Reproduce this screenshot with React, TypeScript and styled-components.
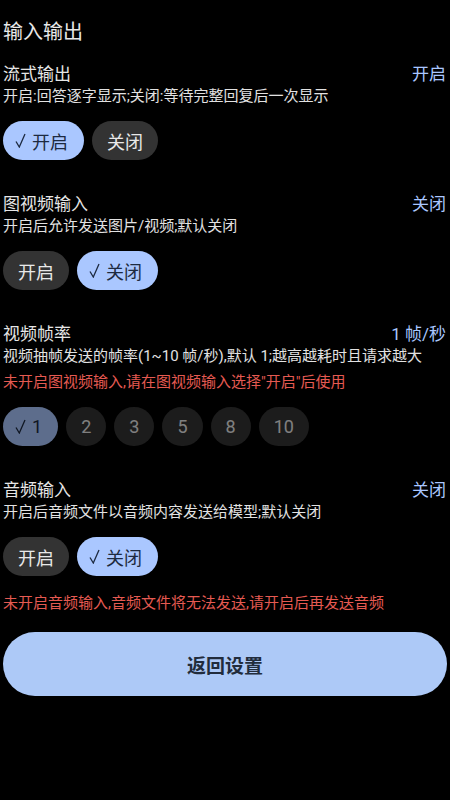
import React, { useState } from 'react';
import styled, { createGlobalStyle } from 'styled-components';

const GlobalStyle = createGlobalStyle`
  html, body {
    margin: 0;
    padding: 0;
    background: #000;
  }
  body {
    font-family: Roboto, "Noto Sans CJK SC", sans-serif;
    -webkit-font-smoothing: antialiased;
  }
`;

const Page = styled.div`
  min-height: 100vh;
  background: #000;
  padding: 18px 3px 24px;
  box-sizing: border-box;
  display: flex;
  flex-direction: column;
`;

const PageTitle = styled.h1`
  margin: 0 0 14px;
  font-size: 20px;
  line-height: 28px;
  font-weight: 400;
  color: #e8e8e8;
`;

const Section = styled.section<{ $last?: boolean }>`
  display: flex;
  flex-direction: column;
  margin-bottom: ${(p) => (p.$last ? 0 : 30)}px;
`;

const TitleRow = styled.div`
  display: flex;
  justify-content: space-between;
  align-items: center;
  height: 24px;
`;

const SectionTitle = styled.span`
  font-size: 17px;
  color: #e6e6e6;
`;

const SectionValue = styled.span`
  font-size: 17px;
  color: #aac7ff;
  padding-right: 1px;
`;

const Desc = styled.p`
  margin: 0;
  font-size: 15px;
  line-height: 25px;
  color: #e2e2e2;
  white-space: nowrap;
`;

const Warning = styled.p<{ $gap?: number }>`
  margin: ${(p) => p.$gap ?? 0}px 0 0;
  font-size: 15px;
  line-height: 26px;
  color: #e55a52;
  white-space: nowrap;
`;

const Pills = styled.div<{ $dim?: boolean }>`
  display: flex;
  gap: 8px;
  margin-top: 12px;
  opacity: ${(p) => (p.$dim ? 0.55 : 1)};
`;

const Pill = styled.button<{ $on: boolean }>`
  height: 39px;
  padding: ${(p) => (p.$on ? '0 16px 0 12px' : '0 15px')};
  border: none;
  border-radius: 20px;
  font-family: Roboto, "Noto Sans CJK SC", sans-serif;
  font-size: 18px;
  background: ${(p) => (p.$on ? '#aac7ff' : '#333333')};
  color: ${(p) => (p.$on ? '#1d2a40' : '#e8e8e8')};
  display: flex;
  align-items: center;
  gap: 6px;
  cursor: pointer;
`;

const CheckIcon = styled.svg`
  width: 11px;
  height: 15px;
  flex: none;
`;

const Check = () => (
  <CheckIcon viewBox="0 0 11 15">
    <polyline points="1,8.5 4.3,14 10,1" fill="none" stroke="currentColor" strokeWidth="1.3" />
  </CheckIcon>
);

const BackButton = styled.button`
  margin-top: 16px;
  height: 64px;
  width: 100%;
  border: none;
  border-radius: 32px;
  background: #adc9f7;
  color: #222c3c;
  font-family: Roboto, "Noto Sans CJK SC", sans-serif;
  font-size: 19px;
  font-weight: 700;
  cursor: pointer;
`;

type Option = { label: string; value: string };

const onOff: Option[] = [
  { label: '开启', value: 'on' },
  { label: '关闭', value: 'off' },
];

const fpsOptions: Option[] = ['1', '2', '3', '5', '8', '10'].map((v) => ({ label: v, value: v }));

const Choice: React.FC<{
  options: Option[];
  value: string;
  onChange: (v: string) => void;
  dim?: boolean;
}> = ({ options, value, onChange, dim }) => (
  <Pills $dim={dim}>
    {options.map((o) => (
      <Pill key={o.value} $on={o.value === value} onClick={() => onChange(o.value)}>
        {o.value === value && <Check />}
        {o.label}
      </Pill>
    ))}
  </Pills>
);

export default function App() {
  const [stream, setStream] = useState('on');
  const [media, setMedia] = useState('off');
  const [fps, setFps] = useState('1');
  const [audio, setAudio] = useState('off');

  const label = (v: string) => (v === 'on' ? '开启' : '关闭');

  return (
    <>
      <GlobalStyle />
      <Page>
        <PageTitle>输入输出</PageTitle>

        <Section>
          <TitleRow>
            <SectionTitle>流式输出</SectionTitle>
            <SectionValue>{label(stream)}</SectionValue>
          </TitleRow>
          <Desc>开启:回答逐字显示;关闭:等待完整回复后一次显示</Desc>
          <Choice options={onOff} value={stream} onChange={setStream} />
        </Section>

        <Section>
          <TitleRow>
            <SectionTitle>图视频输入</SectionTitle>
            <SectionValue>{label(media)}</SectionValue>
          </TitleRow>
          <Desc>开启后允许发送图片/视频;默认关闭</Desc>
          <Choice options={onOff} value={media} onChange={setMedia} />
        </Section>

        <Section>
          <TitleRow>
            <SectionTitle>视频帧率</SectionTitle>
            <SectionValue>{fps} 帧/秒</SectionValue>
          </TitleRow>
          <Desc>视频抽帧发送的帧率(1~10 帧/秒),默认 1;越高越耗时且请求越大</Desc>
          {media !== 'on' && <Warning>未开启图视频输入,请在图视频输入选择"开启"后使用</Warning>}
          <Choice options={fpsOptions} value={fps} onChange={setFps} dim={media !== 'on'} />
        </Section>

        <Section $last>
          <TitleRow>
            <SectionTitle>音频输入</SectionTitle>
            <SectionValue>{label(audio)}</SectionValue>
          </TitleRow>
          <Desc>开启后音频文件以音频内容发送给模型;默认关闭</Desc>
          <Choice options={onOff} value={audio} onChange={setAudio} />
          {audio !== 'on' && (
            <Warning $gap={14}>未开启音频输入,音频文件将无法发送,请开启后再发送音频</Warning>
          )}
        </Section>

        <BackButton>返回设置</BackButton>
      </Page>
    </>
  );
}
